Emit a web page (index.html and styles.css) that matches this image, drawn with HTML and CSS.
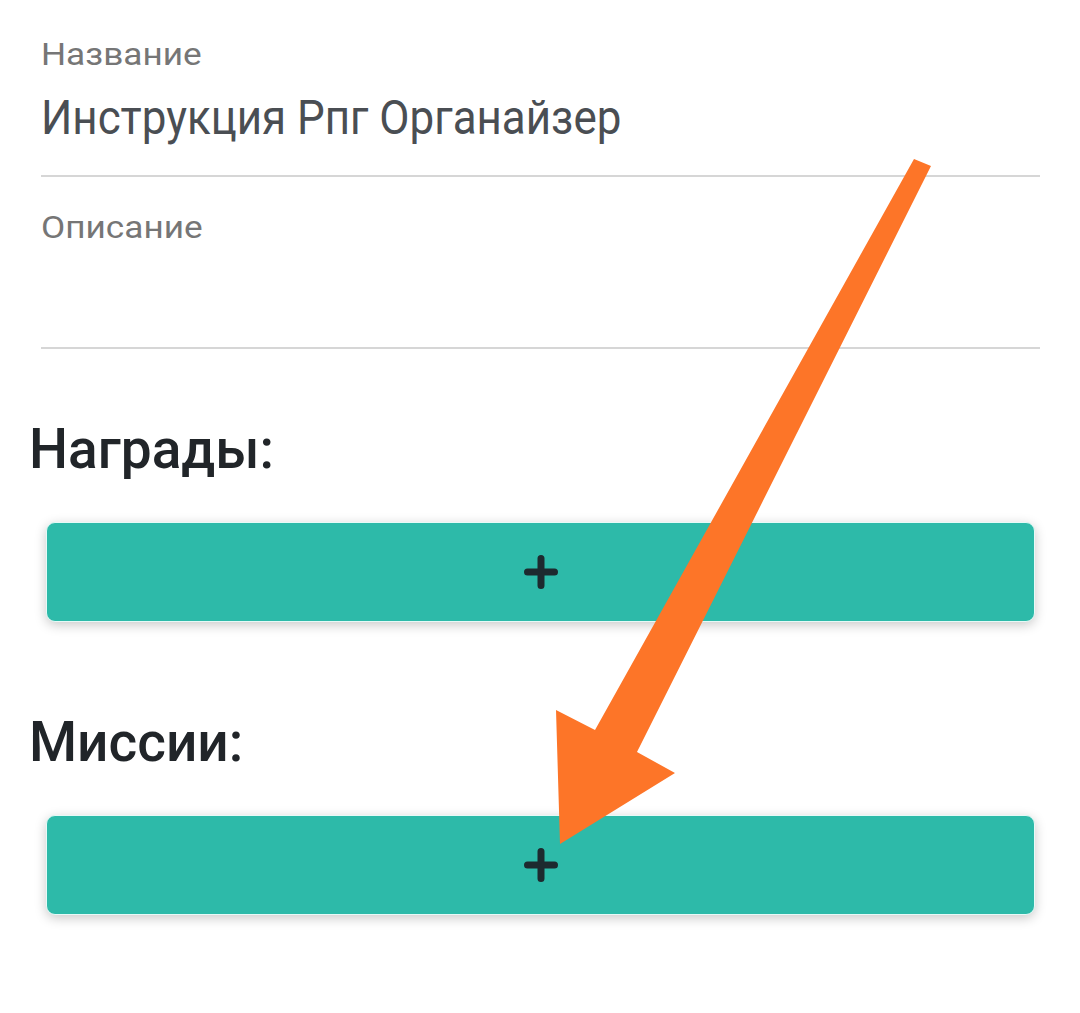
FILE: index.html
```html
<!DOCTYPE html>
<html lang="ru">
<head>
<meta charset="utf-8">
<title>Квест</title>
<link rel="stylesheet" href="styles.css">
</head>
<body>
<div class="page">
  <div class="field field-name">
    <div class="label"><span class="label-text">Название</span></div>
    <div class="value"><span class="value-text">Инструкция Рпг Органайзер</span></div>
  </div>
  <div class="field field-desc">
    <div class="label"><span class="label-text">Описание</span></div>
    <div class="textarea"></div>
  </div>

  <h3 class="section-title title-rewards">Награды:</h3>
  <button class="add-btn" type="button" aria-label="Добавить награду">
    <svg class="plus" width="34" height="34" viewBox="0 0 34 34"><path d="M3.5 17H30.5M17 3.5V30.5" stroke="#1d2a2f" stroke-width="7" stroke-linecap="round" fill="none"/></svg>
  </button>

  <h3 class="section-title title-missions">Миссии:</h3>
  <button class="add-btn" type="button" aria-label="Добавить миссию">
    <svg class="plus" width="34" height="34" viewBox="0 0 34 34"><path d="M3.5 17H30.5M17 3.5V30.5" stroke="#1d2a2f" stroke-width="7" stroke-linecap="round" fill="none"/></svg>
  </button>

  <svg class="arrow" width="1080" height="1013" viewBox="0 0 1080 1013">
    <polygon points="914,159 931,166 637,752 675,773 560,844 556,710 595,730" fill="#fd7528"/>
  </svg>
</div>
</body>
</html>
```

FILE: styles.css
```css
html, body {
  margin: 0;
  padding: 0;
  background: #ffffff;
}

.page {
  position: relative;
  width: 1080px;
  height: 1013px;
  overflow: hidden;
  font-family: Roboto, "Noto Sans", "Liberation Sans", sans-serif;
}

.field {
  margin: 0 40px 0 41px;
  border-bottom: 2px solid #d6d6d6;
}

.field-name {
  padding-top: 34px;
  padding-bottom: 27px;
}

.field-desc {
  padding-top: 30px;
}

.label {
  font-size: 32px;
  line-height: 40px;
  color: #767676;
  height: 40px;
  white-space: nowrap;
}

.label-text {
  display: inline-block;
  transform: scaleX(1.1);
  transform-origin: left center;
}

.value {
  margin-top: 14px;
  font-size: 49px;
  line-height: 60px;
  height: 60px;
  color: #4a4e53;
  white-space: nowrap;
}

.value-text {
  display: inline-block;
  transform: scaleX(0.896);
  transform-origin: left center;
}

.textarea {
  height: 100px;
}

.section-title {
  margin: 0;
  padding-left: 29px;
  font-size: 55px;
  line-height: 66px;
  font-weight: 500;
  color: #212529;
}

.title-rewards {
  margin-top: 67px;
}

.title-missions {
  margin-top: 87px;
}

.add-btn {
  display: flex;
  align-items: center;
  justify-content: center;
  box-sizing: border-box;
  margin: 40px 0 0 46px;
  width: 989px;
  height: 100px;
  padding: 0;
  border: 1px solid #e6faf7;
  border-radius: 9px;
  background: #2dbaa9;
  box-shadow: 0 3px 12px rgba(0, 0, 0, 0.22);
  cursor: pointer;
}

.title-missions + .add-btn {
  margin-top: 40px;
}

.plus {
  display: block;
}

.arrow {
  position: absolute;
  left: 0;
  top: 0;
  pointer-events: none;
}
```
